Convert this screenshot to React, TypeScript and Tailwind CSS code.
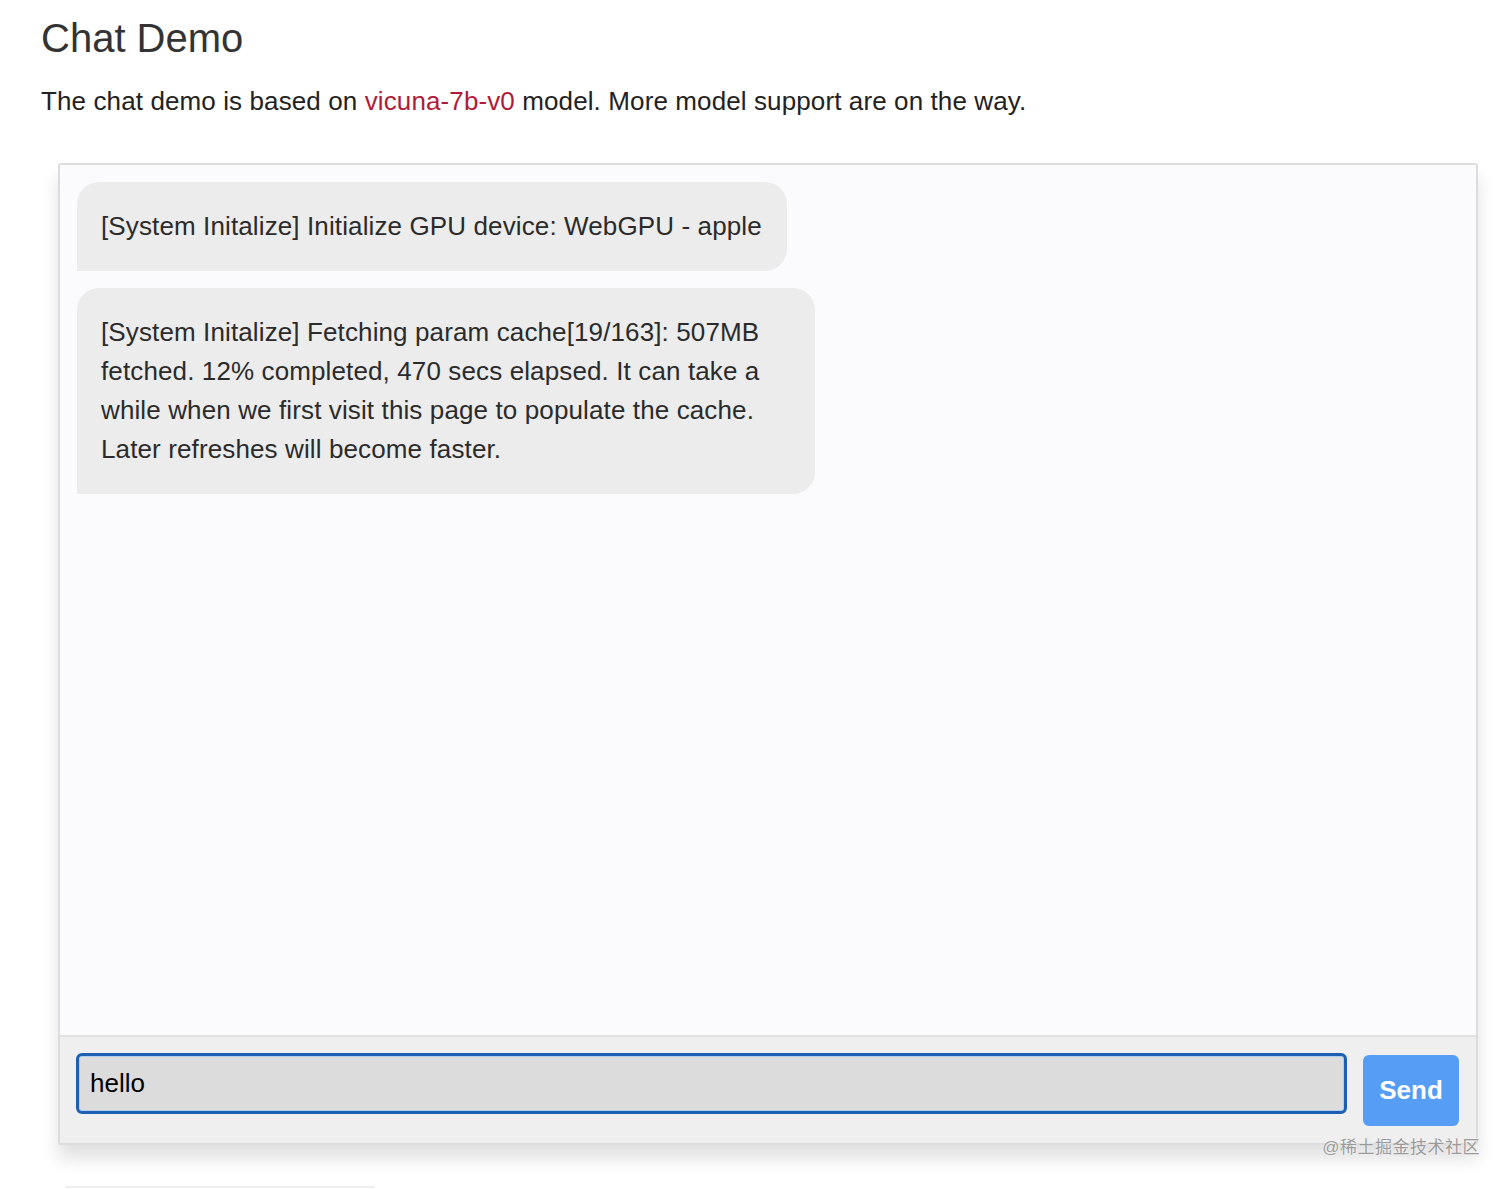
import React, { useState } from "react";

const font = { fontFamily: '"Liberation Sans", Arial, Helvetica, sans-serif' };

const messages = [
    "[System Initalize] Initialize GPU device: WebGPU - apple",
    "[System Initalize] Fetching param cache[19/163]: 507MB fetched. 12% completed, 470 secs elapsed. It can take a while when we first visit this page to populate the cache. Later refreshes will become faster.",
];

const Bubble: React.FC<{ text: string }> = ({ text }) => {
    return (
        <div className="w-fit max-w-[738px] bg-[#ececec] text-[#2b2b2b] text-[26px] leading-[39px] tracking-[0.12px] pt-[25px] pb-[25px] pl-[24px] pr-[25px] rounded-tl-[22px] rounded-tr-[22px] rounded-br-[22px]">
            {text}
        </div>
    );
};

export default function App() {
    const [value, setValue] = useState("hello");

    return (
        <div className="min-h-screen bg-white pl-[41px] pt-[14px]" style={font}>
            <h1 className="text-[40px] leading-[48px] text-[#333333] mb-[20px]">Chat Demo</h1>
            <p className="text-[26px] leading-[39px] tracking-[0.11px] text-[#222222]">
                The chat demo is based on <span className="text-[#b01b37]">vicuna-7b-v0</span> model. More model support are on the way.
            </p>

            <div className="relative mt-[42px] ml-[17px] w-[1420px] h-[982px] flex flex-col border-2 border-[#dcdcdc] rounded-[3px] bg-[#fbfbfd] shadow-[0_14px_18px_rgba(0,0,0,0.12)]">
                <div className="flex-1 flex flex-col gap-[17px] pt-[17px] pl-[17px]">
                    {messages.map((m, i) => (
                        <Bubble key={i} text={m} />
                    ))}
                </div>
                <div className="flex flex-row items-start gap-[16px] border-t-2 border-[#e0e0e0] bg-[#efefef] pt-[16px] pb-[17px] pl-[16px] pr-[17px]">
                    <input
                        value={value}
                        onChange={(e) => setValue(e.target.value)}
                        className="flex-1 h-[61px] bg-[#dcdcdc] border-[3px] border-[#1d5fb2] rounded-[6px] shadow-[inset_0_0_0_1px_#aecdf0] px-[11px] text-[26px] text-black outline-none"
                    />
                    <button className="mt-[2px] w-[96px] h-[71px] bg-[#569df6] rounded-[6px] text-white text-[26px] font-bold">
                        Send
                    </button>
                </div>
                <div
                    className="absolute right-[-4px] bottom-[-17px] text-[17px] leading-[24px] text-[#9a9a9a] tracking-[0.5px]"
                    style={{ fontFamily: '"Liberation Sans", "Noto Sans CJK SC", sans-serif', textShadow: "0 0 2px #fff" }}
                >
                    @稀土掘金技术社区
                </div>
            </div>

            <div className="mt-[41px] ml-[24px] w-[310px] h-[2px] bg-[#eeeeee]" />
        </div>
    );
}
